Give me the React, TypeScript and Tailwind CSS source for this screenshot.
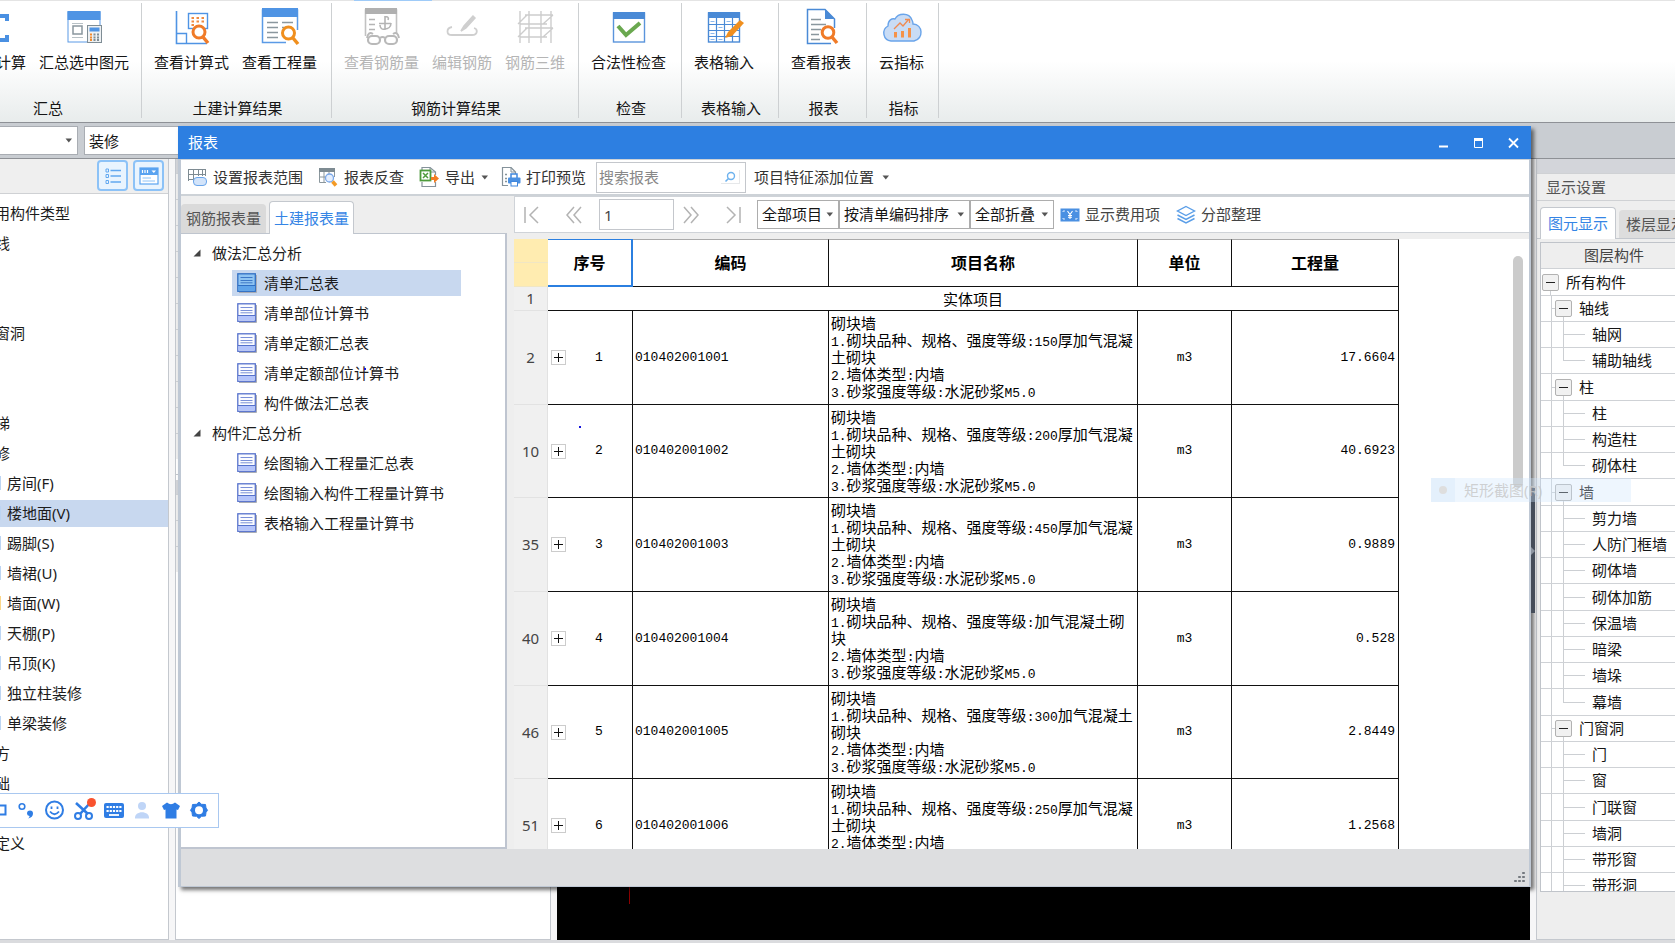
import React from "react";

const UI = "font-['Noto_Sans','Noto_Sans_CJK_SC',sans-serif]";

/* ---------- ribbon icons ---------- */

const Svg = ({ w = 40, h = 40, children }: { w?: number; h?: number; children: React.ReactNode }) => (
  <svg width={w} height={h} viewBox={`0 0 ${w} ${h}`} fill="none" aria-hidden="true" className="shrink-0">
    {children}
  </svg>
);

const SigmaIcon = () => (
  <Svg>
    <path d="M31 15V10H10L20 22L10 34H31V29" stroke="#4a90e2" strokeWidth="4" />
  </Svg>
);

const SummaryIcon = () => (
  <Svg>
    <rect x="4" y="6" width="32" height="30" fill="#fff" stroke="#5a9ae6" />
    <rect x="3.500" y="5" width="33" height="9" fill="#4f94e4" />
    <rect x="9" y="20" width="9" height="8" stroke="#8a979e" strokeWidth="1.500" />
    <path d="M8 17.500H19M8 31.500H19" stroke="#b8c1c6" />
    <rect x="23.500" y="19.500" width="14" height="17" fill="#eef1f3" stroke="#7f8d95" />
    <rect x="25.500" y="21.500" width="10" height="4" fill="#4f94e4" />
    <path d="M26 28.500H28M26 31.500H28M26 34H28" stroke="#f28a2c" strokeWidth="1.800" />
    <path d="M29.500 28.500H31.500M33 28.500H35M29.500 31.500H31.500M33 31.500H35M29.500 34H31.500M33 34H35" stroke="#7f8d95" strokeWidth="1.800" />
  </Svg>
);

const FormulaIcon = () => (
  <Svg>
    <path d="M4.500 5V37.500H35" stroke="#4f94e4" strokeWidth="1.600" />
    <path d="M4.500 27.500H14.500V37" stroke="#4f94e4" strokeWidth="1.400" />
    <rect x="16.500" y="7.500" width="19" height="15" fill="#fff" stroke="#4f94e4" strokeWidth="1.400" />
    <path d="M19.500 12H22M24.500 12H27M29.500 12H32M19.500 15.500H22M24.500 15.500H27M29.500 15.500H32M19.500 19H22" stroke="#f08a40" strokeWidth="2" />
    <circle cx="27" cy="26" r="6" fill="#fff" stroke="#f07b28" strokeWidth="3" />
    <path d="M31 31L36 37" stroke="#f07b28" strokeWidth="3.500" />
  </Svg>
);

const QuantityIcon = () => (
  <Svg>
    <path d="M26 36.500H2.500V4H37.500V24" fill="#fff" stroke="#5a9ae6" strokeWidth="1.500" />
    <rect x="2" y="2" width="36" height="9" fill="#4f94e4" />
    <path d="M7 16.500H18M7 21.500H18M7 26.500H18M7 31.500H18M22 16.500H33M22 21.500H26" stroke="#8a979e" strokeWidth="1.600" />
    <circle cx="28.500" cy="27" r="6" fill="#fff" stroke="#f08f1e" strokeWidth="3" />
    <path d="M33 32L38 38" stroke="#f08f1e" strokeWidth="3.500" />
  </Svg>
);

const RebarIcon = () => (
  <Svg>
    <path d="M3.500 30V4H34.500V28" stroke="#c2c2c2" strokeWidth="1.600" />
    <rect x="3" y="2" width="32" height="6" fill="#b0b0b0" />
    <path d="M7 13.500H13M7 18.500H13M7 23.500H13" stroke="#b4b4b4" strokeWidth="1.500" />
    <path d="M23 10V24M17 17.500H29M23 11C26 10 27 12 26 14M23 23C20 24 18 22 18 19M23 23C26 23 29 21 29 17" stroke="#b4b4b4" strokeWidth="1.600" />
    <path d="M5 32C6 27 8 26 11 28M37 32C36 27 34 26 31 28" stroke="#b9b9b9" strokeWidth="2" />
    <rect x="6" y="30" width="12" height="8" rx="4" fill="#fff" stroke="#b9b9b9" strokeWidth="2.200" />
    <rect x="23" y="30" width="12" height="8" rx="4" fill="#fff" stroke="#b9b9b9" strokeWidth="2.200" />
    <path d="M18 32Q20.500 30 23 32" stroke="#b9b9b9" strokeWidth="2" />
  </Svg>
);

const EditRebarIcon = () => (
  <Svg>
    <path d="M31 10L22 20L19 25L24 22L33 12Z" fill="#cfcfcf" stroke="#cfcfcf" strokeWidth="1.500" />
    <path d="M10 21C4 22 4 29 10 29H30C36 29 36 23 32 22" stroke="#cfcfcf" strokeWidth="1.800" />
  </Svg>
);

const Rebar3dIcon = () => (
  <Svg>
    <path d="M5 5V37M14 5V37M26 5V37M36 5V37M10 9H38M5 18H32M10 22H38M5 31H32M3 18L12 9M3 31L12 22M28 18L38 9M28 31L38 22" stroke="#cdcdcd" strokeWidth="1.400" />
  </Svg>
);

const CheckIcon = () => (
  <Svg>
    <rect x="4.500" y="7" width="31" height="29" fill="#fff" stroke="#5a94dc" strokeWidth="1.400" />
    <rect x="4" y="6" width="32" height="7" fill="#4a8ad6" />
    <path d="M9 20L17 29L31 17" stroke="#6aa84f" strokeWidth="4" />
  </Svg>
);

const SheetIcon = () => (
  <Svg>
    <rect x="4.500" y="7" width="31" height="29" fill="#fff" stroke="#4a8ad6" strokeWidth="1.400" />
    <rect x="4" y="6" width="32" height="6" fill="#4a8ad6" />
    <path d="M5 18.500H35M5 24.500H35M5 30.500H35M12.500 12V36M20.500 12V36M28.500 12V36" stroke="#4a8ad6" strokeWidth="1.200" />
    <path d="M6.500 15.500H10.500M14.500 21.500H18.500M6.500 27.500H10.500M22.500 15.500H26.500M6.500 33.500H10.500M14.500 33.500H18.500" stroke="#8db8ec" />
    <path d="M36 14L40 17L28 30L21 32L24 26Z" fill="#f08f1e" />
  </Svg>
);

const ReportIcon = () => (
  <Svg>
    <path d="M30 37.500H6.500V3.500H24L33.500 13V22" fill="#fff" stroke="#4a8ad6" strokeWidth="1.500" />
    <path d="M24 3V13H33.500Z" fill="#4a8ad6" />
    <path d="M10 13.500H20M10 18.500H25M10 23.500H20M10 28.500H18M10 33.500H19" stroke="#8a979e" strokeWidth="1.500" />
    <circle cx="27" cy="26.500" r="5.800" fill="#fff" stroke="#f07b28" strokeWidth="3" />
    <path d="M31 31L36 37" stroke="#f07b28" strokeWidth="3.500" />
  </Svg>
);

const CloudIcon = () => (
  <Svg>
    <path d="M9 35A8 8 0 0 1 6 20C6 14 10 12 13 13C16 7 27 6 30 14C31 16 31 17 31 18C41 18 42 33 32 35Z" fill="#c9dcf5" stroke="#69a4ea" strokeWidth="1.400" />
    <path d="M13.500 26V31.500M20.500 25V31.500M27.500 22V31.500" stroke="#f59249" strokeWidth="3" />
    <path d="M12 23L18 17L21 20L27 13M23 13.500H27.500V17" stroke="#f08a50" strokeWidth="1.300" />
  </Svg>
);

/* ---------- small icons ---------- */

const Caret = () => (
  <svg width="8" height="5" viewBox="0 0 8 5" aria-hidden="true" className="shrink-0">
    <path d="M0.500 0.500H7L3.800 4.500Z" fill="#555" />
  </svg>
);

const RangeIcon = () => (
  <Svg w={20} h={20}>
    <path d="M1 2.500H19M1 7.500H19M1 12.500H8M1.500 2V14M6.500 2V14M11.500 2V9M15.500 2V9M18.500 2V9" stroke="#7e8b92" />
    <rect x="6.500" y="10.500" width="13" height="8" rx="3.500" fill="#d3e4fa" stroke="#6aa5ea" />
  </Svg>
);

const TraceIcon = () => (
  <Svg w={20} h={20}>
    <path d="M1.500 2V15.500H8M1 10H8M6 5V15M11 5V9M16.500 4V10" stroke="#8b979d" />
    <rect x="1" y="1" width="16" height="4" fill="#7e8b92" />
    <circle cx="11.500" cy="11" r="4" fill="#e4eefd" stroke="#7aa7e8" strokeWidth="1.300" />
    <path d="M14.500 14.500L18 18.500" stroke="#f39a25" strokeWidth="3.500" />
  </Svg>
);

const ExportIcon = () => (
  <Svg w={20} h={20}>
    <path d="M3 3V0.500H11L16.500 5V8M3 15V19.500H16.500V15" stroke="#85929a" strokeWidth="1.200" />
    <path d="M11 0.500V5H16" stroke="#85929a" />
    <rect x="1.500" y="3.500" width="10" height="10" fill="#fff" stroke="#4e9b3c" strokeWidth="1.800" />
    <path d="M4 6L9 11M9 6L4 11" stroke="#4e9b3c" strokeWidth="1.500" />
    <path d="M12 10H15V7L20 11.500L15 16V13H12Z" fill="#f27c22" />
  </Svg>
);

const PrintIcon = () => (
  <Svg w={20} h={20}>
    <path d="M7 18.500H1.500V0.500H10L14.500 5V7" stroke="#85929a" strokeWidth="1.200" />
    <path d="M10 0.500V5H14" stroke="#85929a" />
    <path d="M4 7.500H6M4 11.500H6M4 14.500H6" stroke="#85929a" strokeWidth="1.500" />
    <path d="M10 11V7H16V11" stroke="#3f86dd" strokeWidth="1.500" />
    <rect x="7" y="10.500" width="12.500" height="6" rx="1" fill="#4a90e2" />
    <rect x="10" y="14.500" width="6.500" height="4.500" fill="#fff" stroke="#3f86dd" />
  </Svg>
);

const FeeIcon = () => (
  <Svg w={20} h={14}>
    <rect x="0.500" y="0.500" width="19" height="13" fill="#4a90e2" />
    <path d="M3 4V3H5M17 4V3H15M3 10V11H5M17 10V11H15" stroke="#d6e7fb" />
    <path d="M7.500 3L10 6.500L12.500 3M10 6.500V11M8 7.500H12M8 9.300H12" stroke="#fff" strokeWidth="1.100" />
  </Svg>
);

const LayersIcon = () => (
  <Svg w={20} h={20}>
    <path d="M10 1.500L18.500 6L10 10.500L1.500 6Z" stroke="#5a9ee8" strokeWidth="1.400" />
    <path d="M1.500 10L10 14.500L18.500 10M1.500 13.500L10 18L18.500 13.500" stroke="#5a9ee8" strokeWidth="1.500" />
  </Svg>
);

const NavIcon = ({ d }: { d: string }) => (
  <Svg w={18} h={18}>
    <path d={d} stroke="#b3b3b3" strokeWidth="1.500" />
  </Svg>
);

const DocIcon = ({ active }: { active?: boolean }) => (
  <Svg w={20} h={20}>
    <path d="M2 19.500H19.500V2" stroke="#a9acb5" />
    <rect x="0.800" y="0.800" width="17.500" height="17.500" fill={active ? "#8fc4f2" : "#fbfcff"} stroke={active ? "#2f6fc4" : "#5571cc"} strokeWidth="1.300" />
    <rect x="1.500" y="12.500" width="16" height="5" fill={active ? "#5ea3ea" : "#b4c4fb"} />
    <path d="M1 12.500H18" stroke={active ? "#2f6fc4" : "#5571cc"} />
    <path d="M3.500 4.500H15.500M3.500 7.500H15.500M3.500 9.800H15.500" stroke={active ? "#3c78c8" : "#7a90d8"} />
  </Svg>
);

/* ---------- ribbon ---------- */

type Tool = { label: string; icon: React.ReactNode; off?: boolean; clipped?: boolean };

const groups: { name: string; cls: string; tools: Tool[] }[] = [
  {
    name: "汇总",
    cls: "-ml-[47px] w-[189px] items-end",
    tools: [
      { label: "计算", icon: <SigmaIcon />, clipped: true },
      { label: "汇总选中图元", icon: <SummaryIcon /> },
    ],
  },
  {
    name: "土建计算结果",
    cls: "w-[190px]",
    tools: [
      { label: "查看计算式", icon: <FormulaIcon /> },
      { label: "查看工程量", icon: <QuantityIcon /> },
    ],
  },
  {
    name: "钢筋计算结果",
    cls: "w-[247px]",
    tools: [
      { label: "查看钢筋量", icon: <RebarIcon />, off: true },
      { label: "编辑钢筋", icon: <EditRebarIcon />, off: true },
      { label: "钢筋三维", icon: <Rebar3dIcon />, off: true },
    ],
  },
  { name: "检查", cls: "w-[103px]", tools: [{ label: "合法性检查", icon: <CheckIcon /> }] },
  { name: "表格输入", cls: "w-[97px]", tools: [{ label: "表格输入", icon: <SheetIcon /> }] },
  { name: "报表", cls: "w-[88px]", tools: [{ label: "查看报表", icon: <ReportIcon /> }] },
  { name: "指标", cls: "w-[72px]", tools: [{ label: "云指标", icon: <CloudIcon /> }] },
];

const Ribbon = () => (
  <header className="relative flex h-[123px] shrink-0 overflow-hidden border-b border-[#8e9196] bg-linear-to-b from-white from-50% to-[#e8ecec] pt-[3px] pb-[4px]">
    <div className="absolute inset-x-0 top-0 h-px bg-[#e4e4e4]" />
    <div className="absolute top-0 left-[354px] h-px w-[78px] bg-[#9fcbf8]" />
    {groups.map((g) => (
      <section key={g.name} className={`flex shrink-0 flex-col border-r border-[#cdd0d2] ${g.cls}`}>
        <div className="flex gap-[13px] px-[12px] pt-[3px]">
          {g.tools.map((t) => (
            <button
              key={t.label}
              disabled={t.off}
              className={`flex flex-col items-center gap-[5px] text-[15px] leading-[22px] whitespace-nowrap ${t.off ? "text-[#b5b5b5]" : "text-[#151515]"} ${t.clipped ? "w-[60px]" : ""}`}
            >
              {t.icon}
              <span className={t.clipped ? "self-end" : ""}>{t.label}</span>
            </button>
          ))}
        </div>
        <h2 className="mt-auto w-full pb-[2px] pl-[2px] text-center text-[15px] leading-[16px] text-[#151515]">{g.name}</h2>
      </section>
    ))}
  </header>
);

/* ---------- left component list ---------- */

const leftRows: { t: string; sub?: boolean; on?: boolean }[] = [
  { t: "用构件类型" },
  { t: "线" },
  { t: "" },
  { t: "" },
  { t: "窗洞" },
  { t: "" },
  { t: "" },
  { t: "梯" },
  { t: "修" },
  { t: "房间(F)", sub: true },
  { t: "楼地面(V)", sub: true, on: true },
  { t: "踢脚(S)", sub: true },
  { t: "墙裙(U)", sub: true },
  { t: "墙面(W)", sub: true },
  { t: "天棚(P)", sub: true },
  { t: "吊顶(K)", sub: true },
  { t: "独立柱装修", sub: true },
  { t: "单梁装修", sub: true },
  { t: "方" },
  { t: "础" },
  { t: "" },
  { t: "定义" },
];

const LeftPanel = () => (
  <aside className="flex w-[169px] shrink-0 flex-col overflow-hidden border-r border-b border-[#c4c8ce] bg-white">
    <div className="flex h-[35px] shrink-0 items-center justify-end gap-[5px] border-b border-[#cfd1d4] bg-[#efefef] pr-[4px] pb-px">
      <button aria-label="列表" className="flex size-[31px] items-center justify-center rounded-[4px] border-2 border-[#8cc2f7] bg-[#e9f4fe]">
        <Svg w={18} h={18}>
          <path d="M6.500 3.500H17M6.500 9H17M6.500 15H17" stroke="#62a8f0" strokeWidth="1.400" />
          <path d="M2 2H4.500V5H2ZM2 7.500H4.500V10.500H2ZM2 13.500H4.500V16.500H2Z" stroke="#62a8f0" />
        </Svg>
      </button>
      <button aria-label="属性窗口" className="flex size-[31px] items-center justify-center rounded-[4px] border-2 border-[#8cc2f7] bg-[#e9f4fe]">
        <Svg w={20} h={18}>
          <rect x="1" y="1" width="18" height="16" fill="#fff" stroke="#5aa3f0" strokeWidth="1.200" />
          <rect x="1" y="1" width="18" height="7" fill="#5aa3f0" />
          <path d="M3.500 3V6M6 3V6M8.500 3V6" stroke="#fff" strokeWidth="1.200" />
          <path d="M12.500 3.500H17L14.800 6Z" fill="#fff" />
          <path d="M3.500 11H12M3.500 14H16" stroke="#8cc2f7" />
        </Svg>
      </button>
    </div>
    <ul className="pt-[4px] text-[15px] text-[#1c1c1c]">
      {leftRows.map((r, i) => (
        <li key={i} className="flex h-[30px] items-center">
          <div className={`flex h-[27px] w-full items-center whitespace-nowrap ${r.on ? "bg-[#c8d8ef]" : ""}`}>
            {r.sub && <span className={`h-[14px] w-px ${r.t.startsWith("墙面") ? "bg-[#fbd78a]" : "bg-[#bcd5f3]"}`} />}
            <span className={r.sub ? "ml-[6px]" : "-ml-[5px]"}>{r.t}</span>
          </div>
        </li>
      ))}
    </ul>
  </aside>
);

/* ---------- right layer tree ---------- */

type Node = { t: string; d: 0 | 1 | 2; last?: boolean };

const layerRows: Node[] = [
  { t: "所有构件", d: 0 },
  { t: "轴线", d: 1 },
  { t: "轴网", d: 2 },
  { t: "辅助轴线", d: 2, last: true },
  { t: "柱", d: 1 },
  { t: "柱", d: 2 },
  { t: "构造柱", d: 2 },
  { t: "砌体柱", d: 2, last: true },
  { t: "墙", d: 1 },
  { t: "剪力墙", d: 2 },
  { t: "人防门框墙", d: 2 },
  { t: "砌体墙", d: 2 },
  { t: "砌体加筋", d: 2 },
  { t: "保温墙", d: 2 },
  { t: "暗梁", d: 2 },
  { t: "墙垛", d: 2 },
  { t: "幕墙", d: 2, last: true },
  { t: "门窗洞", d: 1 },
  { t: "门", d: 2 },
  { t: "窗", d: 2 },
  { t: "门联窗", d: 2 },
  { t: "墙洞", d: 2 },
  { t: "带形窗", d: 2 },
  { t: "带形洞", d: 2 },
];

const Toggle = ({ name }: { name: string }) => (
  <div className="flex w-[17px] shrink-0 flex-col items-center self-stretch">
    <span className="flex-1" />
    <button aria-label={`收起${name}`} className="flex size-[17px] items-center justify-center rounded-[2px] border border-[#b2b2b2] bg-[#f1f1f1]">
      <span className="h-px w-[9px] bg-[#222]" />
    </button>
    <span className="w-px flex-1 bg-[#cccfd3]" />
  </div>
);

const LayerRow = ({ n }: { n: Node }) => (
  <li className="flex h-[26px] shrink-0 items-center border-b border-[#cfd2d6] whitespace-nowrap nth-[4n+1]:h-[27px]">
    {n.d === 0 && <span className="w-px" />}
    {n.d > 0 && <span className="w-[11px] shrink-0 self-stretch border-r border-[#cccfd3]" />}
    {n.d === 1 && <span className="h-px w-[3px] shrink-0 bg-[#cccfd3]" />}
    {n.d < 2 ? (
      <Toggle name={n.t} />
    ) : (
      <div className="ml-[11px] flex w-[22px] shrink-0 flex-col self-stretch">
        <span className="flex-1 border-b border-l border-[#cccfd3]" />
        <span className={`flex-1 ${n.last ? "" : "border-l border-[#cccfd3]"}`} />
      </div>
    )}
    <span className="ml-[7px]">{n.t}</span>
  </li>
);

const RightPanel = () => (
  <aside className="flex w-[139px] shrink-0 flex-col overflow-hidden border-b border-l border-[#c4c8ce] bg-[#eeeeee] text-[15px]">
    <div className="h-[14px] shrink-0 bg-[#d3d5da]" />
    <h2 className="h-[28px] shrink-0 border-t border-b border-[#cfd1d4] pl-[9px] text-[15px] leading-[26px] text-[#555]">显示设置</h2>
    <div className="flex h-[38px] shrink-0 items-end gap-[3px] border-b border-[#c4c8ce] pl-[3px] whitespace-nowrap">
      <button className="-mb-px h-[32px] shrink-0 rounded-t-[4px] border border-b-0 border-[#c4c8ce] bg-white px-[7px] text-[#3585e5]">图元显示</button>
      <button className="h-[28px] shrink-0 rounded-t-[4px] bg-[#dddddd] px-[7px] text-[#555]">楼层显示</button>
    </div>
    <div className="mt-[3px] ml-[3px] flex h-[650px] shrink-0 flex-col overflow-hidden border-t border-b border-l border-[#c0c4ca] bg-white text-[#151515]">
      <div className="h-[26px] shrink-0 border-b border-[#cfd2d6] bg-[#eeeeee] pl-[43px] leading-[25px] text-[#444]">图层构件</div>
      <ul className="flex flex-col">
        {layerRows.map((n, i) => (
          <LayerRow key={i} n={n} />
        ))}
      </ul>
    </div>
  </aside>
);

/* ---------- report dialog ---------- */

const reportTree = [
  {
    name: "做法汇总分析",
    items: ["清单汇总表", "清单部位计算书", "清单定额汇总表", "清单定额部位计算书", "构件做法汇总表"],
  },
  {
    name: "构件汇总分析",
    items: ["绘图输入工程量汇总表", "绘图输入构件工程量计算书", "表格输入工程量计算书"],
  },
];

const ReportTree = () => (
  <div className="flex w-[326px] shrink-0 flex-col">
    <div className="flex h-[38px] shrink-0 items-end gap-[3px] border-b border-[#bfc5ce]">
      <button className="h-[29px] rounded-t-[4px] bg-[#dadada] px-[5px] text-[#555]">钢筋报表量</button>
      <button className="-mb-px h-[33px] rounded-t-[4px] border border-b-0 border-[#c4c8ce] bg-white px-[4px] text-[#3585e5]">土建报表量</button>
    </div>
    <div className="relative min-h-0 flex-1 border-r-2 border-b-2 border-[#bfc5d0] bg-white pt-[4px]">
      <span className="absolute top-[134px] left-[183px] size-[2px] bg-[#1414dc]" />
      {reportTree.map((g, gi) => (
        <div key={g.name}>
          <div className="flex h-[30px] items-center gap-[11px] pl-[12px]">
            <svg width="8" height="8" viewBox="0 0 8 8" aria-hidden="true">
              <path d="M7.500 0.500V7.500H0.500Z" fill="#444" />
            </svg>
            <span>{g.name}</span>
          </div>
          <ul>
            {g.items.map((it, i) => {
              const on = gi === 0 && i === 0;
              return (
                <li key={it} className="flex h-[30px] items-center pl-[51px]">
                  <button className={`flex h-[26px] w-[229px] items-center gap-[7px] pl-[5px] whitespace-nowrap ${on ? "bg-[#c8d8ef]" : ""}`}>
                    <DocIcon active={on} />
                    <span>{it}</span>
                  </button>
                </li>
              );
            })}
          </ul>
        </div>
      ))}
    </div>
  </div>
);

/* Latin runs use a half-width face so that they sit in the Chinese character grid. */
const Mixed = ({ text }: { text: string }) => (
  <>
    {text.split(/([\x21-\x7e]+)/).map((part, i) =>
      i % 2 ? (
        <span key={i} className="font-['Liberation_Mono',monospace] text-[13px] leading-none">
          {part}
        </span>
      ) : (
        part
      ),
    )}
  </>
);

const rows = [
  { line: 2, no: 1, code: "010402001001", spec: "150厚加气混凝土砌块", qty: "17.6604" },
  { line: 10, no: 2, code: "010402001002", spec: "200厚加气混凝土砌块", qty: "40.6923" },
  { line: 35, no: 3, code: "010402001003", spec: "450厚加气混凝土砌块", qty: "0.9889" },
  { line: 40, no: 4, code: "010402001004", spec: "加气混凝土砌块", qty: "0.528" },
  { line: 46, no: 5, code: "010402001005", spec: "300加气混凝土砌块", qty: "2.8449" },
  { line: 51, no: 6, code: "010402001006", spec: "250厚加气混凝土砌块", qty: "1.2568" },
];

const cell = "border-r border-b border-[#111] p-0";
const head = "border-r border-b border-t border-[#111] border-t-[#aaa] p-0 text-[16px] font-bold";
const gutter = "border-r border-b border-[#e2e2e2] bg-[#f0f0f0] p-0 text-center font-normal text-[#444]";
const mono = "font-['Liberation_Mono',monospace] text-[13px]";

const ReportTable = () => (
  <table className="w-[885px] table-fixed border-separate border-spacing-0 bg-white text-[15px] text-black">
    <colgroup>
      <col className="w-[34px]" />
      <col className="w-[85px]" />
      <col className="w-[196px]" />
      <col className="w-[309px]" />
      <col className="w-[94px]" />
      <col className="w-[167px]" />
    </colgroup>
    <thead>
      <tr className="h-[24px]">
        <td className="border-b border-[#f0e6c4] bg-[#ffecb0] p-0" />
        <th rowSpan={2} className="border-t border-r-2 border-b-2 border-[#2b7fe0] p-0 text-[16px] font-bold">序号</th>
        <th rowSpan={2} className={head}>编码</th>
        <th rowSpan={2} className={head}>项目名称</th>
        <th rowSpan={2} className={head}>单位</th>
        <th rowSpan={2} className={head}>工程量</th>
      </tr>
      <tr className="h-[24px]">
        <td className="border-b border-[#f0e6c4] bg-[#ffecb0] p-0" />
      </tr>
    </thead>
    <tbody>
      <tr className="h-[24px]">
        <th className={gutter}>1</th>
        <td colSpan={5} className={`${cell} text-center leading-[22px]`}>实体项目</td>
      </tr>
      {rows.map((r) => (
        <tr key={r.no} className="h-[94px] nth-[3n]:h-[93px]">
          <th className={gutter}>{r.line}</th>
          <td className={cell}>
            <div className="flex items-center pl-[3px]">
              <button aria-label={`展开第${r.no}项`} className="flex size-[15px] items-center justify-center border border-[#ccc] bg-white">
                <svg width="9" height="9" viewBox="0 0 9 9" aria-hidden="true">
                  <path d="M0 4.500H9M4.500 0V9" stroke="#111" />
                </svg>
              </button>
              <span className={`flex-1 text-center ${mono}`}>{r.no}</span>
            </div>
          </td>
          <td className={`${cell} pl-[2px] ${mono}`}>{r.code}</td>
          <td className={`${cell} pl-[2px] leading-[17px]`}>
            <p>砌块墙</p>
            <p className="break-all">
              <Mixed text={`1.砌块品种、规格、强度等级:${r.spec}`} />
            </p>
            <p>
              <Mixed text="2.墙体类型:内墙" />
            </p>
            <p>
              <Mixed text="3.砂浆强度等级:水泥砂浆M5.0" />
            </p>
          </td>
          <td className={`${cell} text-center ${mono}`}>m3</td>
          <td className={`${cell} pr-[3px] text-right ${mono}`}>{r.qty}</td>
        </tr>
      ))}
    </tbody>
  </table>
);

const Select = ({ label, cls }: { label: string; cls: string }) => (
  <div className={`relative flex h-[29px] items-center ${cls}`}>
    <select aria-label={label} defaultValue={label} className="h-full w-full appearance-none border border-[#adadad] bg-white pl-[4px] text-[15px] text-[#151515]">
      <option>{label}</option>
    </select>
    <span className="pointer-events-none absolute right-[5px] flex">
      <Caret />
    </span>
  </div>
);

const navBtn = "flex h-[28px] w-[34px] items-center justify-center";

const ReportView = () => (
  <div className="flex min-w-0 flex-1 flex-col">
    <div className="flex h-[37px] shrink-0 items-center border border-r-0 border-[#cfd3d8] bg-white">
      <button aria-label="首页" className={navBtn}>
        <NavIcon d="M2 1V17M15 1L7 9L15 17" />
      </button>
      <button aria-label="上一页" className={`ml-[8px] ${navBtn}`}>
        <NavIcon d="M9 1L2 9L9 17M16 1L9 9L16 17" />
      </button>
      <input aria-label="页码" defaultValue="1" className="ml-[8px] h-[31px] w-[75px] border border-[#c4c7cc] bg-white pl-[4px] text-[15px] text-[#444]" />
      <button aria-label="下一页" className={navBtn}>
        <NavIcon d="M2 1L9 9L2 17M9 1L16 9L9 17" />
      </button>
      <button aria-label="末页" className={`ml-[8px] ${navBtn}`}>
        <NavIcon d="M16 1V17M3 1L11 9L3 17" />
      </button>
      <Select label="全部项目" cls="ml-[7px] w-[82px]" />
      <Select label="按清单编码排序" cls="w-[131px]" />
      <Select label="全部折叠" cls="w-[84px]" />
      <button className="ml-[6px] flex items-center gap-[5px] whitespace-nowrap text-[#444]">
        <FeeIcon />
        显示费用项
      </button>
      <button className="ml-[16px] flex items-center gap-[5px] whitespace-nowrap text-[#444]">
        <LayersIcon />
        分部整理
      </button>
    </div>
    <div className="relative mt-[6px] min-h-0 flex-1 overflow-hidden bg-white">
      <ReportTable />
      <span className="absolute top-[187px] left-[65px] size-[2px] bg-[#1414dc]" />
      <div className="absolute top-[17px] right-[6px] h-[232px] w-[10px] rounded-full bg-[#cbcbcb]" />
    </div>
  </div>
);

const ReportDialog = () => (
  <section role="dialog" aria-label="报表" className="absolute top-[126px] right-[144px] bottom-[56px] left-[178px] flex flex-col bg-[#eeeeee] text-[15px] text-[#1c1c1c] shadow-[3px_3px_4px_rgba(0,0,0,0.55)]">
    <div className="flex h-[33px] shrink-0 items-center bg-[#2d7fe1] pl-[10px] text-white">
      <h1 className="mr-auto text-[15px]">报表</h1>
      <button aria-label="最小化" className="flex h-full w-[35px] items-center justify-center">
        <Svg w={12} h={12}>
          <path d="M1 9.500H10" stroke="#fff" strokeWidth="2" />
        </Svg>
      </button>
      <button aria-label="最大化" className="flex h-full w-[35px] items-center justify-center">
        <Svg w={12} h={12}>
          <path d="M1.500 2V10.500H9.500V2" stroke="#fff" />
          <path d="M1 2.500H10" stroke="#fff" strokeWidth="3" />
        </Svg>
      </button>
      <button aria-label="关闭" className="flex h-full w-[35px] items-center justify-center">
        <Svg w={12} h={12}>
          <path d="M1 1.500L10 10.500M10 1.500L1 10.500" stroke="#fff" strokeWidth="1.800" />
        </Svg>
      </button>
    </div>
    <div className="flex min-h-0 flex-1 flex-col border-r-2 border-b border-l-[3px] border-[#bfc8d4]">
      <div className="flex h-[37px] shrink-0 items-center border-t border-b-2 border-[#cdd2d7] bg-white pl-[6px] whitespace-nowrap text-[#333]">
        <button className="flex items-center gap-[6px]">
          <RangeIcon />
          设置报表范围
        </button>
        <button className="ml-[15px] flex items-center gap-[6px]">
          <TraceIcon />
          报表反查
        </button>
        <button className="ml-[15px] flex items-center gap-[6px]">
          <ExportIcon />
          导出
          <Caret />
        </button>
        <button className="ml-[12px] flex items-center gap-[5px]">
          <PrintIcon />
          打印预览
        </button>
        <div className="ml-[10px] flex h-[31px] w-[150px] items-center border border-[#c4c7cc] bg-white pr-[5px]">
          <input aria-label="搜索报表" placeholder="搜索报表" className="min-w-0 flex-1 pl-[2px] text-[15px] placeholder:text-[#888]" />
          <button aria-label="搜索" className="flex h-[14px] w-[19px] items-center justify-center border-r border-b border-[#e6e8ea]">
            <Svg w={12} h={12}>
              <circle cx="7" cy="5" r="3.500" stroke="#6db2ee" strokeWidth="1.400" />
              <path d="M4.500 7.500L1.500 10.500" stroke="#6db2ee" strokeWidth="1.600" />
            </Svg>
          </button>
        </div>
        <button className="ml-[8px] flex items-center gap-[8px]">
          项目特征添加位置
          <Caret />
        </button>
      </div>
      <div className="flex min-h-0 flex-1">
        <ReportTree />
        <div className="w-[7px] shrink-0" />
        <ReportView />
      </div>
      <div className="flex h-[37px] shrink-0 items-end justify-end bg-[#dddee0] pr-[3px] pb-[3px]">
        <Svg w={12} h={12}>
          <path d="M9.500 1V3M9.500 5V7M9.500 9V11M5.500 5V7M5.500 9V11M1.500 9V11" stroke="#74797f" strokeWidth="2.600" />
        </Svg>
      </div>
    </div>
  </section>
);

/* ---------- input method bar ---------- */

const ImeBar = () => (
  <div className="absolute top-[793px] left-0 flex h-[35px] w-[219px] items-center justify-between border border-l-0 border-[#a9c8f0] bg-white pr-[9px] pb-[2px]">
    <Svg w={7} h={20}>
      <path d="M0 5.500H5.500V14.500H0" stroke="#2f7de4" strokeWidth="2" />
    </Svg>
    <Svg w={20} h={20}>
      <circle cx="7" cy="6.500" r="2.800" stroke="#2f7de4" strokeWidth="1.600" />
      <path d="M12 13.500A3 3 0 1 1 18 13.500Q18 17.500 13 18.500Q15 17 14.500 16Q12 15.500 12 13.500Z" fill="#2f7de4" />
    </Svg>
    <Svg w={20} h={20}>
      <circle cx="10.500" cy="10" r="8.500" stroke="#2f7de4" strokeWidth="2" />
      <path d="M7.500 6.500V9M13.500 6.500V9M6 11.500Q10.500 17 15 11.500" stroke="#2f7de4" strokeWidth="1.800" />
    </Svg>
    <Svg w={24} h={24}>
      <path d="M4 5L16 16M18 5L8 16" stroke="#2f7de4" strokeWidth="2.600" />
      <circle cx="6" cy="18" r="3" stroke="#2f7de4" strokeWidth="2" />
      <circle cx="17" cy="18" r="3" stroke="#2f7de4" strokeWidth="2" />
      <circle cx="19.500" cy="4.500" r="4.500" fill="#f9532f" />
    </Svg>
    <Svg w={20} h={20}>
      <rect x="0" y="3" width="20" height="15" rx="2" fill="#2f7de4" />
      <path d="M2.500 7H17.500M2.500 11H17.500" stroke="#fff" strokeWidth="2.200" strokeDasharray="2.200 1" />
      <path d="M5 15H15" stroke="#fff" strokeWidth="1.800" />
    </Svg>
    <Svg w={20} h={20}>
      <circle cx="10" cy="6" r="4" fill="#bfd5f7" />
      <path d="M3 18.500C2 10 18 10 17 18.500Z" fill="#bfd5f7" />
    </Svg>
    <Svg w={20} h={20}>
      <path d="M1 6L6 2.500Q10 6 14 2.500L19 6L17 10L15.500 9.500V18.500H4.500V9.500L3 10Z" fill="#2f7de4" />
    </Svg>
    <Svg w={20} h={20}>
      <path d="M10 2L12.500 4.300L16.500 4.500L17 8L18.500 10.200L17 12.500L16.500 16L12.500 16.300L10 18.500L7.500 16.300L3.500 16L3 12.500L1.500 10.200L3 8L3.500 4.500L7.500 4.300Z" fill="#2f7de4" stroke="#2f7de4" strokeWidth="1" strokeLinejoin="round" />
      <circle cx="10" cy="10.200" r="4" fill="#fff" />
    </Svg>
  </div>
);

export default function App() {
  return (
    <div className={`relative flex h-screen flex-col overflow-hidden bg-[#dadbde] ${UI}`}>
      <Ribbon />
      <div className="flex h-[36px] shrink-0 items-center gap-[6px] border-b border-[#8e9196] bg-[#c9cdd2]">
        <div className="relative flex h-[29px] w-[78px] items-center">
          <select aria-label="楼层" className="h-full w-full appearance-none border border-l-0 border-[#a9adb3] bg-white" />
          <span className="pointer-events-none absolute right-[5px]">
            <Caret />
          </span>
        </div>
        <input aria-label="构件类型" defaultValue="装修" className="h-[29px] w-[110px] border border-[#a9adb3] bg-white pl-[4px] text-[15px] text-[#151515]" />
      </div>
      <main className="mb-[3px] flex min-h-0 flex-1 bg-[#f6f6f7]">
        <LeftPanel />
        <div className="ml-[6px] flex w-[376px] shrink-0 flex-col overflow-hidden border-r border-b border-l border-[#c4c8ce] bg-white">
          <div className="h-[14px] shrink-0 bg-[#d3d5da]" />
          {Array.from({ length: 11 }, (_, i) => (
            <div key={i} className="h-[26px] shrink-0 border-t border-[#cfd2d6] bg-[#efefef]" />
          ))}
          <div className="h-[16px] shrink-0 border-b border-[#c4c8ce]" />
          <div className="mt-[5px] h-[14px] shrink-0 bg-[#d3d5da]" />
          {Array.from({ length: 3 }, (_, i) => (
            <div key={i} className="h-[26px] shrink-0 border-t border-[#cfd2d6] bg-[#efefef]" />
          ))}
        </div>
        <div className="ml-[6px] flex min-w-0 flex-1 items-end bg-black pb-[36px] pl-[72px]">
          <span className="h-[60px] w-px bg-[#8c0000]" />
        </div>
        <div className="w-[6px] shrink-0" />
        <RightPanel />
      </main>
      <ReportDialog />
      <div className="absolute top-[488px] right-[140px] flex h-[125px] w-[4px] items-center bg-[#454d5a]">
        <svg width="4" height="8" viewBox="0 0 4 8" aria-hidden="true">
          <path d="M0 0L4 4L0 8Z" fill="#8d95a1" />
        </svg>
      </div>
      <div className="absolute top-[478px] right-[44px] flex h-[24px] w-[200px] items-center bg-[#cfe6fb]/35 text-[15px] text-[#c6c6c6]/80">
        <span className="flex h-full w-[24px] items-center justify-center bg-[#d5e8fa]/40">
          <span className="size-[8px] rounded-full bg-[#dedede]" />
        </span>
        <span className="ml-[9px]">矩形截图(R)</span>
      </div>
      <ImeBar />
    </div>
  );
}
